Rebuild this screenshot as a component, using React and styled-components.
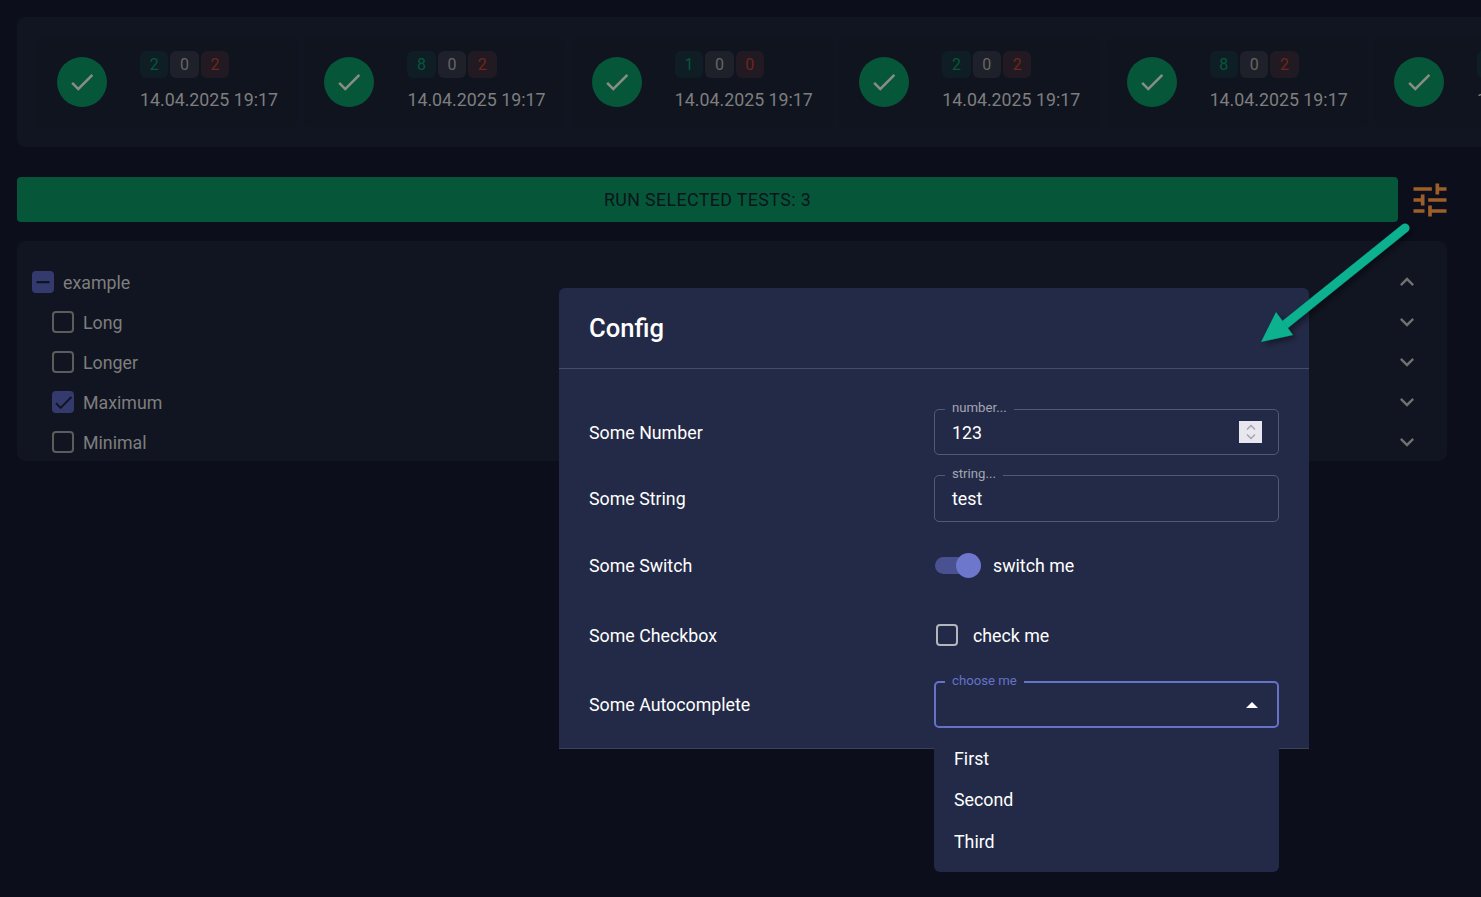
import React from 'react'
import styled, { createGlobalStyle } from 'styled-components'

const GlobalStyle = createGlobalStyle`
  html, body {
    margin: 0;
    height: 100%;
    overflow: hidden;
    background: #0c0e1b;
  }

  body {
    font-family: Roboto, "Liberation Sans", sans-serif;
    font-size: 17.8px;
  }
`

const Page = styled.div`
  position: relative;
  width: 1481px;
  height: 897px;
  padding: 17px 0 0 17px;
  box-sizing: border-box;
  overflow: hidden;
`

const RunsPanel = styled.div`
  display: flex;
  gap: 6.4px;
  width: 1500px;
  height: 130px;
  padding: 20px;
  box-sizing: border-box;
  border-radius: 8px;
  background: #111521;
  overflow: hidden;
`

const RunCard = styled.div`
  flex: none;
  display: flex;
  align-items: center;
  gap: 33px;
  height: 90px;
  padding: 0 20px;
  border-radius: 8px;
  background: #10141f;
`

const StatusCircle = styled.div`
  flex: none;
  display: flex;
  align-items: center;
  justify-content: center;
  width: 50px;
  height: 50px;
  border-radius: 50%;
  background: #06573a;
  color: #8b8d84;
`

const RunInfo = styled.div`
  display: flex;
  flex-direction: column;
  gap: 8px;
  padding: 1px 0;
`

const Chips = styled.div`
  display: flex;
  gap: 2px;
`

const Chip = styled.span`
  padding: 0 9.7px;
  height: 27px;
  line-height: 27px;
  border-radius: 6px;
  font-size: 16px;
  background: ${p => ({ ok: '#0e1e24', skip: '#1e2129', fail: '#211a22' }[p.$kind])};
  color: ${p => ({ ok: '#06573a', skip: '#666666', fail: '#702619' }[p.$kind])};
`

const RunDate = styled.div`
  color: #7e7e7e;
  line-height: 27px;
  white-space: nowrap;
`

const Toolbar = styled.div`
  display: flex;
  align-items: center;
  margin-top: 30px;
`

const RunButton = styled.div`
  width: 1381px;
  height: 45px;
  line-height: 45px;
  border-radius: 4px;
  background: #06573a;
  color: #091519;
  letter-spacing: 0.4px;
  text-align: center;
`

const SettingsButton = styled.div`
  display: flex;
  margin-left: 10px;
  color: #9c5f2a;
`

const TreePanel = styled.div`
  width: 1430px;
  height: 220px;
  margin-top: 19px;
  padding: 21px 26px 0 15px;
  box-sizing: border-box;
  border-radius: 8px;
  background: #111521;
  overflow: hidden;
`

const TreeRow = styled.div`
  display: flex;
  align-items: center;
  height: 40px;
  padding-left: ${p => (p.$child ? 20 : 0)}px;
  color: #7e7e7e;
`

const TreeLabel = styled.span`
  flex: 1;
  margin-left: 9px;
`

const Chevron = styled.svg`
  width: 28px;
  height: 28px;
  fill: #707070;
`

const Box = styled.span`
  flex: none;
  display: flex;
  align-items: center;
  justify-content: center;
  width: 22px;
  height: 22px;
  box-sizing: border-box;
  border-radius: 4px;
  border: 2.4px solid ${p => (p.$on ? '#343a6e' : p.$light ? '#b4b6bd' : '#5c5c5c')};
  background: ${p => (p.$on ? '#343a6e' : 'transparent')};
  color: #10141f;

  svg {
    flex: none;
  }
`

const Modal = styled.div`
  position: absolute;
  left: 559px;
  top: 288px;
  width: 750px;
  height: 461px;
  box-sizing: border-box;
  border-radius: 6px 6px 0 0;
  background: #232a47;
  border-bottom: 1px solid #3b4258;
  color: #fff;
`

const ModalHeader = styled.div`
  display: flex;
  align-items: center;
  height: 80px;
  padding: 0 30px;
  border-bottom: 1px solid #474d66;
  font-size: 25.6px;
  font-weight: 500;
`

const ModalBody = styled.div`
  padding: 30px 30px 0;
`

const ConfigRow = styled.div`
  display: flex;
  align-items: center;
  height: ${p => p.$h}px;
`

const ConfigLabel = styled.div`
  width: 345px;
  flex: none;
`

const Field = styled.div`
  position: relative;
  display: flex;
  align-items: center;
  justify-content: space-between;
  width: 345px;
  height: ${p => p.$h}px;
  padding: 0 16px 0 17px;
  box-sizing: border-box;
  border-radius: 5px;
  border: ${p => (p.$focus ? '2px solid #6572c8' : '1px solid #525974')};
`

const FieldLabel = styled.span`
  position: absolute;
  left: ${p => (p.$focus ? 9 : 10)}px;
  top: -10px;
  padding: 0 7px;
  background: #232a47;
  font-size: 13.2px;
  line-height: 15px;
  color: ${p => (p.$focus ? '#6572c8' : '#a3a6b3')};
`

const Spinner = styled.span`
  display: flex;
  flex-direction: column;
  align-items: center;
  justify-content: center;
  width: 23px;
  height: 22px;
  background: #e9e7ee;
`

const Inline = styled.div`
  display: flex;
  align-items: center;
`

const SwitchTrack = styled.span`
  position: relative;
  width: 40px;
  height: 17px;
  margin-left: 1px;
  border-radius: 9px;
  background: #4a5190;
`

const SwitchThumb = styled.span`
  position: absolute;
  right: -6px;
  top: -4px;
  width: 25px;
  height: 25px;
  border-radius: 50%;
  background: #6d77cc;
`

const SwitchText = styled.span`
  margin-left: 18px;
`

const CheckText = styled.span`
  margin-left: 15px;
`

const CheckWrap = styled.span`
  display: flex;
  margin-left: 2px;
`

const Caret = styled.span`
  width: 0;
  height: 0;
  margin-right: 3px;
  border-left: 6px solid transparent;
  border-right: 6px solid transparent;
  border-bottom: 6px solid #fff;
`

const Menu = styled.div`
  position: absolute;
  left: 934px;
  top: 728px;
  width: 345px;
  height: 144px;
  padding-top: 9.8px;
  box-sizing: border-box;
  border-radius: 0 0 6px 6px;
  background: #232a47;
  color: #fff;
`

const MenuItem = styled.div`
  height: 41.5px;
  line-height: 41.5px;
  padding-left: 20px;
`

const Annotation = styled.svg`
  position: absolute;
  left: 0;
  top: 0;
  width: 1481px;
  height: 897px;
  pointer-events: none;
`

const CHEVRON_DOWN = 'M16.59 8.59 12 13.17 7.41 8.59 6 10l6 6 6-6z'
const CHEVRON_UP = 'M12 8l-6 6 1.41 1.41L12 10.83l4.59 4.58L18 14z'

const runs = [
  { ok: 2, fail: 2 },
  { ok: 8, fail: 2 },
  { ok: 1, fail: 0 },
  { ok: 2, fail: 2 },
  { ok: 8, fail: 2 },
  { ok: 1, fail: 0 }
]

const tests = [
  { name: 'Long' },
  { name: 'Longer' },
  { name: 'Maximum', checked: true },
  { name: 'Minimal' }
]

const CheckIcon = ({ size }) => (
  <svg width={size} height={size} viewBox='0 0 24 24' fill='currentColor'>
    <path d='M9 16.17 4.83 12l-1.42 1.41L9 19 21 7l-1.41-1.41z' />
  </svg>
)

const Run = ({ ok, fail }) => (
  <RunCard>
    <StatusCircle><CheckIcon size={30} /></StatusCircle>
    <RunInfo>
      <Chips>
        <Chip $kind='ok'>{ok}</Chip>
        <Chip $kind='skip'>0</Chip>
        <Chip $kind='fail'>{fail}</Chip>
      </Chips>
      <RunDate>14.04.2025 19:17</RunDate>
    </RunInfo>
  </RunCard>
)

const ToggleChevron = ({ up }) => (
  <Chevron viewBox='0 0 24 24'><path d={up ? CHEVRON_UP : CHEVRON_DOWN} /></Chevron>
)

export default function App () {
  return (
    <Page>
      <GlobalStyle />

      <RunsPanel>
        {runs.map((run, i) => <Run key={i} {...run} />)}
      </RunsPanel>

      <Toolbar>
        <RunButton>RUN SELECTED TESTS: 3</RunButton>
        <SettingsButton>
          <svg width='44' height='44' viewBox='0 0 24 24' fill='currentColor'>
            <path d='M3 17v2h6v-2H3zM3 5v2h10V5H3zm10 16v-2h8v-2h-8v-2h-2v6h2zM7 9v2H3v2h4v2h2V9H7zm14 4v-2H11v2h10zm-6-4h2V7h4V5h-4V3h-2v6z' />
          </svg>
        </SettingsButton>
      </Toolbar>

      <TreePanel>
        <TreeRow>
          <Box $on>
            <svg width='18' height='18' viewBox='0 0 24 24' fill='currentColor'><path d='M3.3 10.5h17.4v3H3.3z' /></svg>
          </Box>
          <TreeLabel>example</TreeLabel>
          <ToggleChevron up />
        </TreeRow>
        {tests.map(test => (
          <TreeRow key={test.name} $child>
            <Box $on={test.checked}>{test.checked && <CheckIcon size={23} />}</Box>
            <TreeLabel>{test.name}</TreeLabel>
            <ToggleChevron />
          </TreeRow>
        ))}
      </TreePanel>

      <Modal>
        <ModalHeader>Config</ModalHeader>
        <ModalBody>
          <ConfigRow $h={66}>
            <ConfigLabel>Some Number</ConfigLabel>
            <Field $h={46}>
              <FieldLabel>number...</FieldLabel>
              123
              <Spinner>
                <svg width='12' height='18' viewBox='0 0 12 18' fill='none' stroke='#a3a1b2' strokeWidth='1.4'>
                  <path d='M2 6.5 6 2.5l4 4M2 11.5l4 4 4-4' />
                </svg>
              </Spinner>
            </Field>
          </ConfigRow>
          <ConfigRow $h={67}>
            <ConfigLabel>Some String</ConfigLabel>
            <Field $h={47}>
              <FieldLabel>string...</FieldLabel>
              test
            </Field>
          </ConfigRow>
          <ConfigRow $h={66}>
            <ConfigLabel>Some Switch</ConfigLabel>
            <Inline>
              <SwitchTrack><SwitchThumb /></SwitchTrack>
              <SwitchText>switch me</SwitchText>
            </Inline>
          </ConfigRow>
          <ConfigRow $h={74}>
            <ConfigLabel>Some Checkbox</ConfigLabel>
            <Inline>
              <CheckWrap><Box $light /></CheckWrap>
              <CheckText>check me</CheckText>
            </Inline>
          </ConfigRow>
          <ConfigRow $h={65}>
            <ConfigLabel>Some Autocomplete</ConfigLabel>
            <Field $h={47} $focus>
              <FieldLabel $focus>choose me</FieldLabel>
              <span />
              <Caret />
            </Field>
          </ConfigRow>
        </ModalBody>
      </Modal>

      <Menu>
        <MenuItem>First</MenuItem>
        <MenuItem>Second</MenuItem>
        <MenuItem>Third</MenuItem>
      </Menu>

      <Annotation viewBox='0 0 1481 897'>
        <defs>
          <filter id='arrowShadow' x='-20%' y='-20%' width='140%' height='140%'>
            <feDropShadow dx='3' dy='3' stdDeviation='3' floodColor='#000' floodOpacity='0.45' />
          </filter>
        </defs>
        <g filter='url(#arrowShadow)'>
          <path d='M1405 228 1282 327' stroke='#07b18f' strokeWidth='9' strokeLinecap='round' fill='none' />
          <path d='M1261 342 1276 312 1293 335z' fill='#07b18f' />
        </g>
      </Annotation>
    </Page>
  )
}
